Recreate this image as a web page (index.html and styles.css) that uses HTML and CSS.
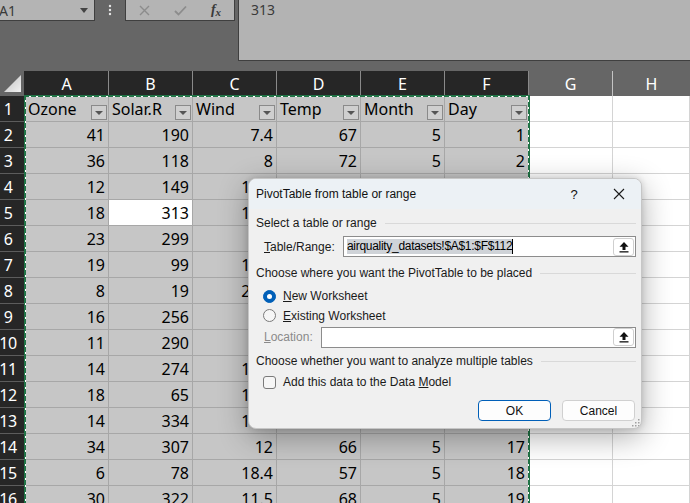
FILE: index.html
```html
<!DOCTYPE html>
<html>
<head>
<meta charset="utf-8">
<link rel="stylesheet" href="styles.css">
</head>
<body>
<div class="topbar">
  <div class="namebox"><span class="nb-text">A1</span><span class="nb-caret"></span></div>
  <div class="dots"><svg width="4" height="12" viewBox="0 0 4 12"><circle cx="2" cy="2" r="1.2" fill="#e6e6e6"/><circle cx="2" cy="6" r="1.2" fill="#e6e6e6"/><circle cx="2" cy="10" r="1.2" fill="#e6e6e6"/></svg></div>
  <div class="fxbox">
    <span class="fxslot"><svg width="11" height="11" viewBox="0 0 11 11"><path d="M1 1L10 10M10 1L1 10" stroke="#8c8c8c" stroke-width="1.4" fill="none"/></svg></span>
    <span class="fxslot"><svg width="13" height="11" viewBox="0 0 13 11"><path d="M1 6L4.5 9.5L12 1.5" stroke="#8c8c8c" stroke-width="1.8" fill="none"/></svg></span>
    <span class="fxslot fxtext"><i>f</i><span class="fxx">x</span></span>
  </div>
  <div class="formula">313</div>
</div>

<div class="grid">
  <div class="corner"><span class="tri"></span></div>
  <div class="ch on">A</div><div class="ch on">B</div><div class="ch on">C</div><div class="ch on">D</div><div class="ch on">E</div><div class="ch on">F</div><div class="ch">G</div><div class="ch last">H</div>

  <div class="rh">1</div>
  <div class="c h"><span>Ozone</span><span class="fb"><span class="fbt"></span></span></div>
  <div class="c h"><span>Solar.R</span><span class="fb"><span class="fbt"></span></span></div>
  <div class="c h"><span>Wind</span><span class="fb"><span class="fbt"></span></span></div>
  <div class="c h"><span>Temp</span><span class="fb"><span class="fbt"></span></span></div>
  <div class="c h"><span>Month</span><span class="fb"><span class="fbt"></span></span></div>
  <div class="c h"><span>Day</span><span class="fb"><span class="fbt"></span></span></div>
  <div class="w"></div><div class="w"></div>

  <div class="rh">2</div><div class="c">41</div><div class="c">190</div><div class="c">7.4</div><div class="c">67</div><div class="c">5</div><div class="c">1</div><div class="w"></div><div class="w"></div>
  <div class="rh">3</div><div class="c">36</div><div class="c">118</div><div class="c">8</div><div class="c">72</div><div class="c">5</div><div class="c">2</div><div class="w"></div><div class="w"></div>
  <div class="rh">4</div><div class="c">12</div><div class="c">149</div><div class="c">12.6</div><div class="c">74</div><div class="c">5</div><div class="c">3</div><div class="w"></div><div class="w"></div>
  <div class="rh">5</div><div class="c">18</div><div class="c sel">313</div><div class="c">11.5</div><div class="c">62</div><div class="c">5</div><div class="c">4</div><div class="w"></div><div class="w"></div>
  <div class="rh">6</div><div class="c">23</div><div class="c">299</div><div class="c">8.6</div><div class="c">65</div><div class="c">5</div><div class="c">7</div><div class="w"></div><div class="w"></div>
  <div class="rh">7</div><div class="c">19</div><div class="c">99</div><div class="c">13.8</div><div class="c">59</div><div class="c">5</div><div class="c">8</div><div class="w"></div><div class="w"></div>
  <div class="rh">8</div><div class="c">8</div><div class="c">19</div><div class="c">20.1</div><div class="c">61</div><div class="c">5</div><div class="c">9</div><div class="w"></div><div class="w"></div>
  <div class="rh">9</div><div class="c">16</div><div class="c">256</div><div class="c">9.7</div><div class="c">69</div><div class="c">5</div><div class="c">12</div><div class="w"></div><div class="w"></div>
  <div class="rh">10</div><div class="c">11</div><div class="c">290</div><div class="c">9.2</div><div class="c">66</div><div class="c">5</div><div class="c">13</div><div class="w"></div><div class="w"></div>
  <div class="rh">11</div><div class="c">14</div><div class="c">274</div><div class="c">10.9</div><div class="c">68</div><div class="c">5</div><div class="c">14</div><div class="w"></div><div class="w"></div>
  <div class="rh">12</div><div class="c">18</div><div class="c">65</div><div class="c">13.2</div><div class="c">58</div><div class="c">5</div><div class="c">15</div><div class="w"></div><div class="w"></div>
  <div class="rh">13</div><div class="c">14</div><div class="c">334</div><div class="c">11.5</div><div class="c">64</div><div class="c">5</div><div class="c">16</div><div class="w"></div><div class="w"></div>
  <div class="rh">14</div><div class="c">34</div><div class="c">307</div><div class="c">12</div><div class="c">66</div><div class="c">5</div><div class="c">17</div><div class="w"></div><div class="w"></div>
  <div class="rh">15</div><div class="c">6</div><div class="c">78</div><div class="c">18.4</div><div class="c">57</div><div class="c">5</div><div class="c">18</div><div class="w"></div><div class="w"></div>
  <div class="rh">16</div><div class="c">30</div><div class="c">322</div><div class="c">11.5</div><div class="c">68</div><div class="c">5</div><div class="c">19</div><div class="w"></div><div class="w"></div>
</div>

<div class="ants"></div>

<div class="dialog">
  <div class="dtitle">
    <span class="dt-text">PivotTable from table or range</span>
    <span class="dt-help">?</span>
    <span class="dt-close"><svg width="12" height="12" viewBox="0 0 12 12"><path d="M1 1L11 11M11 1L1 11" stroke="#1a1a1a" stroke-width="1.1" fill="none"/></svg></span>
  </div>
  <div class="dbody">
    <div class="sec r1"><span>Select a table or range</span><span class="rule"></span></div>
    <div class="field r2">
      <span class="flabel w79"><u>T</u>able/Range:</span>
      <div class="input"><span class="seltext">airquality_datasets!$A$1:$F$112</span><span class="caret"></span>
        <span class="upbtn"><svg width="12" height="12" viewBox="0 0 12 12"><path d="M6 1L1.5 5.8H4.5V9H7.5V5.8H10.5Z" fill="#111"/><rect x="1.5" y="10.2" width="9" height="1.3" fill="#111"/></svg></span>
      </div>
    </div>
    <div class="sec r3"><span>Choose where you want the PivotTable to be placed</span><span class="rule"></span></div>
    <div class="opt r4"><span class="radio on"></span><span><u>N</u>ew Worksheet</span></div>
    <div class="opt r5"><span class="radio"></span><span><u>E</u>xisting Worksheet</span></div>
    <div class="field r6">
      <span class="flabel w57 dim"><u>L</u>ocation:</span>
      <div class="input">
        <span class="upbtn"><svg width="12" height="12" viewBox="0 0 12 12"><path d="M6 1L1.5 5.8H4.5V9H7.5V5.8H10.5Z" fill="#111"/><rect x="1.5" y="10.2" width="9" height="1.3" fill="#111"/></svg></span>
      </div>
    </div>
    <div class="sec r7"><span>Choose whether you want to analyze multiple tables</span><span class="rule"></span></div>
    <div class="opt r8"><span class="check"></span><span>Add this data to the Data <u>M</u>odel</span></div>
    <div class="buttons">
      <span class="btn primary">OK</span>
      <span class="btn">Cancel</span>
    </div>
  </div>
  <svg class="grip" width="9" height="9" viewBox="0 0 9 9"><g fill="#a0a0a0"><rect x="7" y="1" width="1.5" height="1.5"/><rect x="4" y="4" width="1.5" height="1.5"/><rect x="7" y="4" width="1.5" height="1.5"/><rect x="1" y="7" width="1.5" height="1.5"/><rect x="4" y="7" width="1.5" height="1.5"/><rect x="7" y="7" width="1.5" height="1.5"/></g></svg>
</div>
</body>
</html>
```
FILE: styles.css
```css
* { box-sizing: border-box; }
html, body { margin: 0; padding: 0; }
body {
  background: #666666;
  font-family: "Noto Sans", sans-serif;
  width: 690px;
  height: 503px;
  overflow: hidden;
  position: relative;
}

/* ---------- formula bar ---------- */
.topbar { display: flex; align-items: flex-start; height: 71px; }
.namebox {
  width: 95px; height: 21px;
  background: #b4b4b4;
  border-right: 1px solid #3f3f3f;
  border-bottom: 1px solid #3f3f3f;
  display: flex; align-items: center; justify-content: space-between;
  padding-right: 6px;
  font-size: 14px; color: #3a3a3a;
}
.nb-text { margin-left: -1px; }
.nb-caret {
  width: 0; height: 0;
  border-left: 4px solid transparent;
  border-right: 4px solid transparent;
  border-top: 5px solid #444;
}
.dots { width: 30px; height: 20px; display: flex; align-items: center; justify-content: center; }
.fxbox {
  width: 110px; height: 21px;
  background: #b4b4b4;
  border: 1px solid #3f3f3f; border-top: 0;
  display: flex; align-items: center;
}
.fxslot { width: 36px; height: 20px; display: flex; align-items: center; justify-content: center; }
.fxtext { font-family: "Liberation Serif", serif; font-size: 14px; color: #3a3a3a; font-weight: bold; }
.fxtext i { font-style: italic; }
.fxx { font-size: 11px; font-style: italic; margin-left: 0; position: relative; top: 2px; }
.formula {
  margin-left: 3px; flex: 1; height: 61px;
  background: #b3b3b3;
  border-left: 1px solid #3f3f3f;
  border-bottom: 1px solid #3f3f3f;
  padding: 0 0 0 12px;
  font-size: 14px; line-height: 19px; color: #3a3a3a;
}

/* ---------- grid ---------- */
.grid {
  display: grid;
  grid-template-columns: 25px repeat(7, 84px) 1fr;
  grid-template-rows: 25px;
  grid-auto-rows: 26px;
  font-size: 16px;
}
.corner { background: #666; border-right: 1px solid #262626; position: relative; }
.tri {
  position: absolute; left: 4px; top: 4px; width: 17px; height: 17px;
  background: linear-gradient(135deg, #bdbdbd, #f2f2f2);
  clip-path: polygon(100% 0, 100% 100%, 0 100%);
}
.ch {
  background: #666; color: #fff;
  border-right: 1px solid #c4c4c4;
  display: flex; align-items: center; justify-content: center;
}
.ch.on { background: #262626; border-right-color: #8a8a8a; }
.ch.last { border-right: 0; }
.rh {
  background: #262626; color: #fff;
  border-bottom: 1px solid #5c5c5c;
  border-right: 1px solid #262626;
  display: flex; align-items: center; justify-content: center;
  padding-right: 8px;
  letter-spacing: -0.5px;
}
.c {
  background: #c6c6c6; color: #000;
  border-right: 1px solid #a7a7a7;
  border-bottom: 1px solid #a7a7a7;
  display: flex; align-items: center; justify-content: flex-end;
  padding-right: 3px;
}
.c.sel { background: #fff; }
.c.h { justify-content: space-between; padding: 0 1px 0 3px; }
.fb {
  align-self: flex-end; margin-bottom: 1px;
  width: 16px; height: 15px;
  border: 1px solid #8a8a8a; background: #cfcfcf;
  display: flex; align-items: center; justify-content: center;
}
.fbt {
  width: 0; height: 0;
  border-left: 4px solid transparent; border-right: 4px solid transparent;
  border-top: 4px solid #555;
}
.w { background: #fff; border-right: 1px solid #d4d4d4; border-bottom: 1px solid #d4d4d4; }

/* marching ants */
.ants {
  position: absolute; left: 24px; top: 95px; width: 506px; height: 430px;
  border: 2px solid #217346;
  pointer-events: none;
}
.ants::before {
  content: ""; position: absolute; inset: -2px;
  background:
    repeating-linear-gradient(90deg, transparent 0 5px, #fff 5px 7px) 0 1px / 100% 1px no-repeat,
    repeating-linear-gradient(180deg, transparent 0 5px, #fff 5px 7px) 1px 0 / 1px 100% no-repeat,
    repeating-linear-gradient(180deg, transparent 0 5px, #fff 5px 7px) calc(100% - 1px) 0 / 1px 100% no-repeat;
}

/* ---------- dialog ---------- */
.dialog {
  position: absolute; left: 248px; top: 178px;
  width: 394px; height: 251px;
  background: #f0f0f0;
  border: 1px solid #c6c6c6;
  border-radius: 8px;
  box-shadow: 0 8px 30px rgba(0,0,0,0.32), 0 0 6px rgba(0,0,0,0.15);
  overflow: hidden;
  display: flex; flex-direction: column;
  font-family: "Liberation Sans", Arial, sans-serif;
  font-size: 12px; color: #1a1a1a;
}
.dtitle { height: 30px; flex: none; background: #ecf1f5; display: flex; align-items: center; padding-left: 7px; }
.dt-text { flex: 1; font-size: 12px; color: #111; }
.dt-help { width: 46px; text-align: center; font-size: 13px; color: #111; }
.dt-close { width: 44px; display: flex; justify-content: center; align-items: center; }
.dbody { display: flex; flex-direction: column; padding: 4px 5px 0 7px; }
.sec { display: flex; align-items: center; }
.rule { flex: 1; height: 1px; background: #d9d9d9; margin-left: 8px; }
.r1 { height: 20px; }
.r2 { height: 27px; }
.r3 { height: 26px; }
.r4 { height: 20px; }
.r5 { height: 19px; }
.r6 { height: 24px; }
.r7 { height: 24px; }
.r8 { height: 18px; }
.field { display: flex; align-items: center; padding-left: 8px; }
.flabel { flex: none; }
.w79 { width: 79px; }
.w57 { width: 57px; }
.dim { color: #8a8a8a; }
.input {
  flex: 1; height: 21px;
  background: #fff; border: 1px solid #8c8c8c;
  display: flex; align-items: center;
  padding-left: 3px;
  position: relative;
}
.seltext { background: #cfd3d8; color: #000; line-height: 15px; letter-spacing: -0.3px; }
.caret { width: 1px; height: 15px; background: #000; }
.upbtn {
  margin-left: auto; margin-right: 1px;
  width: 21px; height: 18px;
  background: #fff; border: 1px solid #cfcfcf; border-radius: 3px;
  display: flex; align-items: center; justify-content: center;
}
.opt { display: flex; align-items: center; padding-left: 7px; gap: 7px; }
.radio {
  width: 13px; height: 13px; border-radius: 50%;
  border: 1px solid #7a7a7a; background: #f6f6f6;
  display: flex; align-items: center; justify-content: center;
}
.radio.on { background: #005fb8; border-color: #005fb8; }
.radio.on::after { content: ""; width: 5px; height: 5px; border-radius: 50%; background: #fff; }
.check { width: 13px; height: 13px; border-radius: 3px; border: 1px solid #7a7a7a; background: #f6f6f6; }
.buttons { display: flex; justify-content: flex-end; gap: 11px; margin-top: 9px; padding-right: 1px; }
.btn {
  width: 73px; height: 21px;
  background: #fdfdfd; border: 1px solid #d0d0d0; border-radius: 4px;
  display: flex; align-items: center; justify-content: center;
  color: #111;
}
.btn.primary { border-color: #005fb8; }
.grip { position: absolute; right: 1px; bottom: 1px; }
```
